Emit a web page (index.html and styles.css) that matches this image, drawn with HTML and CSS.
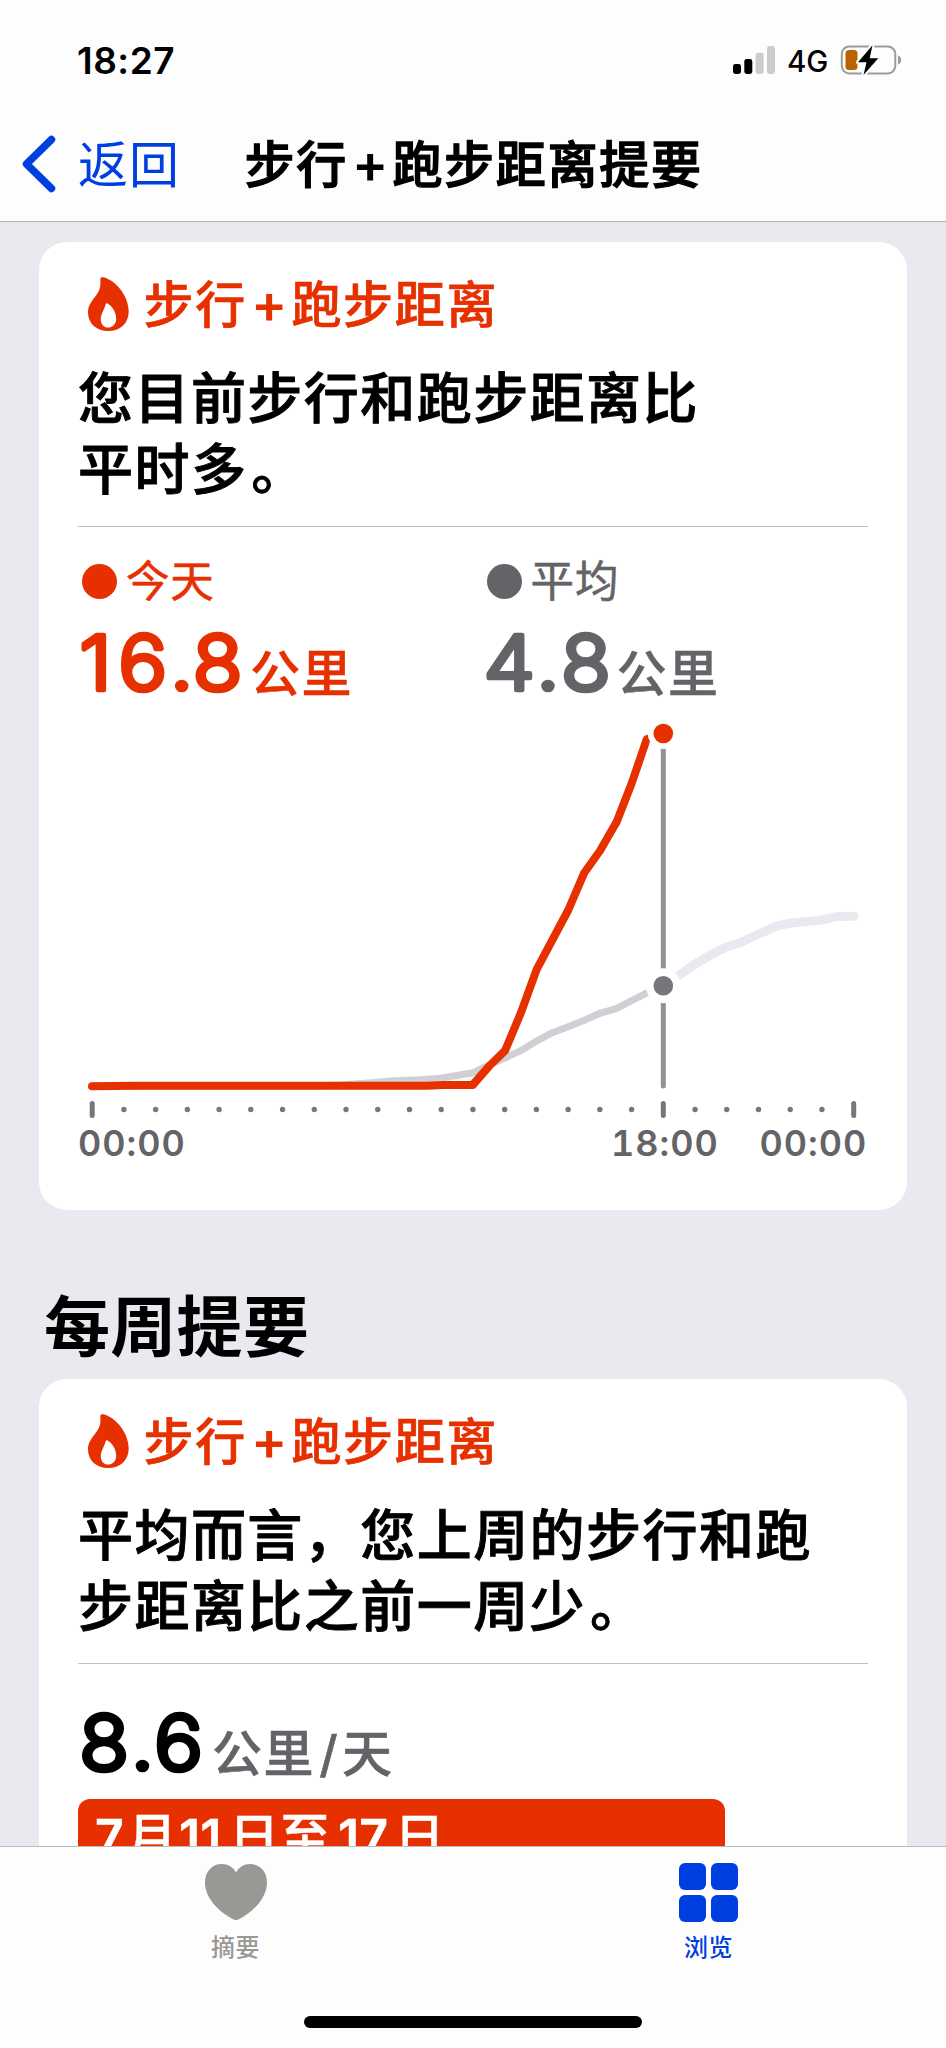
FILE: index.html
```html
<!DOCTYPE html>
<html lang="zh-CN">
<head>
<meta charset="utf-8">
<title>步行+跑步距离提要</title>
<link rel="stylesheet" href="styles.css">
</head>
<body>
<div class="screen">
  <header class="top">
    <div class="status">
      <span class="clock">18:27</span>
      <div class="status-icons">
        <svg class="signal" viewBox="0 0 42 28">
          <rect x="0" y="18" width="8" height="10" rx="2.4"/>
          <rect x="11.3" y="13" width="8" height="15" rx="2.4"/>
          <rect class="off" x="22.6" y="6.700" width="8" height="21.300" rx="2.4"/>
          <rect class="off" x="34" y="0" width="8" height="28" rx="2.4"/>
        </svg>
        <span class="network">4G</span>
        <svg class="battery" viewBox="0 0 62 32">
          <rect class="shell" x="1.800" y="2.500" width="53.500" height="27" rx="7.500"/>
          <path class="nub" d="M58 11.500c4.200 1 4.200 8 0 9z"/>
          <rect class="charge" x="5.500" y="6" width="12" height="20" rx="3.500"/>
          <path class="bolt" d="M32.500 1.300 18 18.200h8.500L23.500 31 38.300 14.200h-8.600z"/>
        </svg>
      </div>
    </div>
    <nav class="nav">
      <svg class="chevron" viewBox="0 0 34 58"><path d="M29.500 4.500 4.500 29l25 24.500"/></svg>
      <span class="back">返回</span>
      <h1 class="title">步行<span class="plus">+</span>跑步距离提要</h1>
    </nav>
  </header>

  <main class="content">
    <section class="card">
      <div class="card-title">
        <svg class="flame" viewBox="0 0 41 54"><path fill-rule="evenodd" d="M12.400 1.500C12.800.300 14 0 15.500.300 29 4 40.700 20 40.700 34.500 40.700 46.500 32 54 20.300 54 8.500 54 0 46.500 0 35.500 0 22.500 13.500 18.500 12.400 5zM17.700 27C16.300 33 12.800 36.500 12.800 42.500c0 4.600 3 8.100 7.200 8.100s8.200-3.300 8.200-8.600c0-7-4-13-8.600-15.600-.9-.5-1.600-.3-1.900.6z"/></svg>
        <h2>步行<span class="plus">+</span>跑步距离</h2>
      </div>
      <p class="summary">您目前步行和跑步距离比<br>平时多<span class="stop">。</span></p>
      <hr class="rule">
      <div class="stats">
        <div class="stat today">
          <div class="legend"><i class="dot"></i>今天</div>
          <div class="value">
            <svg class="number wide" viewBox="0 604 172 96"><text transform="scale(1.07 1)" y="690" x="1.400 37.600 86.300 107.300">16.8</text></svg>
            <span class="unit">公里</span>
          </div>
        </div>
        <div class="stat average">
          <div class="legend"><i class="dot"></i>平均</div>
          <div class="value">
            <svg class="number" viewBox="0 604 134 96"><text transform="scale(1.07 1)" y="690" x=".800 50 72.800">4.8</text></svg>
            <span class="unit">公里</span>
          </div>
        </div>
      </div>
      <svg class="chart" viewBox="78 700 790 490">
        <path class="projected" d="M663.300 985.700 678.300 975.700 695.700 963.700 710.700 955 726.700 947 742.700 941.700 758.700 934 773.300 927.300Q781 924.500 790 923.300L821.700 920 836.700 916.700Q842 916.200 854 916.300"/>
        <path class="usual" d="M92 1086H320L340 1085 375 1082.500 390 1081 420 1079.800 440 1078.300 473.300 1072.700 489 1065 505 1058 520.700 1050.700 536.700 1041 552.300 1032.700 568.300 1026.700 584.300 1020.300 600 1013.300 616.700 1008.300 631.700 1000.700 647.300 992.700 663.300 985.700"/>
        <path class="current" d="M92 1086.300 137 1085.700H426.700L443 1085H472.700L489.300 1066 505 1050.700 520.700 1013.300 536.700 969.300 568.300 910 584.300 872.700 600 850.700 616.700 821.700 631.700 783.300 646.700 739.300 663.300 733.500"/>
        <path class="marker" d="M663.300 740V1086"/>
        <circle class="halo" cx="663.300" cy="733.500" r="15.500"/>
        <circle class="halo" cx="663.300" cy="985.700" r="17.500"/>
        <circle class="point-current" cx="663.300" cy="733.500" r="9.800"/>
        <circle class="point-usual" cx="663.300" cy="985.700" r="9.800"/>
        <path class="tick" d="M92.200 1103.500V1115.500M663.300 1103.500V1115.500M853.700 1103.500V1115.500"/>
        <path class="minor" d="M123.900 1109.500H650"/>
        <path class="minor" d="M695.030 1109.500H830"/>
        <g class="axis"><text x="78" y="1155.500">00:00</text><text x="611" y="1155.500">18:00</text><text x="759.500" y="1155.500">00:00</text></g>
      </svg>
    </section>

    <h2 class="section-title">每周提要</h2>

    <section class="card weekly">
      <div class="card-title">
        <svg class="flame" viewBox="0 0 41 54"><path fill-rule="evenodd" d="M12.400 1.500C12.800.300 14 0 15.500.300 29 4 40.700 20 40.700 34.500 40.700 46.500 32 54 20.300 54 8.500 54 0 46.500 0 35.500 0 22.500 13.500 18.500 12.400 5zM17.700 27C16.300 33 12.800 36.500 12.800 42.500c0 4.600 3 8.100 7.200 8.100s8.200-3.300 8.200-8.600c0-7-4-13-8.600-15.600-.9-.5-1.600-.3-1.900.6z"/></svg>
        <h2>步行<span class="plus">+</span>跑步距离</h2>
      </div>
      <p class="summary">平均而言，您上周的步行和跑<br>步距离比之前一周少<span class="stop">。</span></p>
      <hr class="rule">
      <div class="value daily">
        <svg class="number" viewBox="0 604 134 96"><text transform="scale(1.07 1)" y="690" x="1.100 49.500 71">8.6</text></svg>
        <span class="unit">公里<span class="slash">/</span>天</span>
      </div>
      <div class="bar"><b class="month">7</b>月<b class="from">11</b>日至<b class="to">17</b>日</div>
    </section>
  </main>

  <footer class="tabs">
    <div class="tab-row">
      <div class="tab">
        <svg class="heart" viewBox="0 0 62 56"><path d="M31 8.500C34 3 39 0 45 0 55 0 62 7.500 62 18.500 62 33 50 46.500 34.500 55 32 56.300 30 56.300 27.500 55 12 46.500 0 33 0 18.500 0 7.500 7 0 17 0 23 0 28 3 31 8.500z"/></svg>
        <span>摘要</span>
      </div>
      <div class="tab active">
        <div class="grid"><i></i><i></i><i></i><i></i></div>
        <span>浏览</span>
      </div>
    </div>
    <div class="home"></div>
  </footer>
</div>
</body>
</html>
```
FILE: styles.css
```css
* { box-sizing: border-box; margin: 0; padding: 0; }

body {
  width: 946px;
  font-family: "Noto Sans CJK SC", sans-serif;
  color: #000;
  background: #eae9ef;
}

svg { display: block; flex: none; }

.screen {
  display: flex;
  flex-direction: column;
  width: 946px;
  height: 2048px;
  overflow: hidden;
}

/* Status and navigation bars */
.top {
  flex: none;
  height: 222px;
  background: #fefdfe;
  border-bottom: 1px solid #b2b2b5;
}
.status {
  display: flex;
  justify-content: space-between;
  align-items: center;
  height: 120px;
  padding: 0 44px 0 77px;
  font-family: Inter, sans-serif;
}
.clock { font-size: 37px; font-weight: 600; letter-spacing: .500px; }
.status-icons { display: flex; align-items: center; }
.signal { width: 42px; height: 28px; }
.signal .off { fill: #cdcccd; }
.network { width: 65px; padding-left: 12px; font-size: 29.5px; font-weight: 500; line-height: 36px; padding-top: 2px; }
.battery { width: 62px; height: 32px; }
.shell { fill: none; stroke: #9c9b9c; stroke-width: 2; }
.nub { fill: #9c9b9c; }
.charge { fill: #b86200; }
.bolt { stroke: #fefdfe; stroke-width: 4; paint-order: stroke; stroke-linejoin: round; }

.nav { display: flex; align-items: flex-start; height: 90px; padding: 15px 0 0 22px; }
.chevron { width: 34px; height: 58px; fill: none; stroke: #003fdf; stroke-width: 7.5; stroke-linecap: round; stroke-linejoin: round; }
.back { flex: none; width: 188.500px; margin-top: -4px; padding-left: 22px; font-size: 50px; line-height: 60px; letter-spacing: 1px; color: #003fdf; white-space: nowrap; }
.title { flex: none; margin-top: -4px; font-size: 50px; line-height: 60px; font-weight: 500; letter-spacing: 1.700px; white-space: nowrap; -webkit-text-stroke: 1.300px currentColor; }
.plus { display: inline-block; width: 44.500px; text-align: center; font-family: Inter, sans-serif; font-size: 54px; font-weight: 600; letter-spacing: 0; line-height: 50px; -webkit-text-stroke: 0; }

/* Cards */
.content { flex: 1; min-height: 0; overflow: hidden; padding: 20px 39px 0; }
.card { height: 968px; padding: 29px 39px 0; border-radius: 28px; background: #fff; }
.card-title { display: flex; height: 60px; padding-left: 10px; color: #e63000; }
.card-title h2 { font-size: 50px; line-height: 60px; font-weight: 500; letter-spacing: 1.700px; padding-left: 14.500px; -webkit-text-stroke: .700px currentColor; }
.flame { width: 41px; height: 54px; margin-top: 6px; fill: #e63000; }
.summary { margin-top: 28px; height: 141px; font-size: 55px; line-height: 70.600px; font-weight: 500; letter-spacing: 1.450px; white-space: nowrap; -webkit-text-stroke: .900px currentColor; }
.stop { padding-left: 4px; }
.rule { margin-top: 26px; height: 1px; border: 0; background: #c0c0c2; }

.stats { display: flex; padding-top: 27px; }
.stat { flex: none; width: 404.600px; }
.average { width: 385px; }
.today { color: #e63000; }
.average { color: #646368; }
.legend { display: flex; align-items: center; height: 50px; padding-left: 4px; font-size: 43.500px; line-height: 50px; letter-spacing: .800px; -webkit-text-stroke: .600px currentColor; }
.dot { width: 35px; height: 35px; margin: 5px 9px 0 0; border-radius: 50%; background: currentColor; }
.value { display: flex; height: 96px; }
.number { width: 134px; height: 96px; overflow: visible; }
.number.wide { width: 172px; }
.number text { font-family: Inter, sans-serif; font-size: 76px; font-weight: 300; fill: currentColor; stroke: currentColor; stroke-width: 4.600; stroke-linejoin: round; }
.unit { margin-top: 36px; font-size: 50px; line-height: 60px; letter-spacing: 1.500px; font-weight: 500; white-space: nowrap; -webkit-text-stroke: .500px currentColor; }

.chart { width: 790px; height: 490px; fill: none; }
.projected { stroke: #eae9ef; stroke-width: 9; stroke-linecap: round; stroke-linejoin: round; }
.usual { stroke: #d0cfd5; stroke-width: 7; stroke-linejoin: round; }
.current { stroke: #e63000; stroke-width: 8; stroke-linecap: round; stroke-linejoin: round; }
.marker { stroke: #929196; stroke-width: 5; stroke-linecap: round; }
.halo { fill: #fff; }
.point-current { fill: #e63000; }
.point-usual { fill: #77767b; }
.tick { stroke: #77767b; stroke-width: 5; stroke-linecap: round; }
.minor { stroke: #77767b; stroke-width: 5.400; stroke-linecap: round; stroke-dasharray: 0 31.730; }
.axis text { font-family: Inter, sans-serif; font-size: 36px; font-weight: 600; font-feature-settings: "tnum"; letter-spacing: 1px; fill: #646368; }

.section-title { height: 169px; padding: 67px 0 0 5px; font-size: 66px; line-height: 90px; font-weight: 700; letter-spacing: .300px; }
.daily { margin-top: 20px; }
.daily .unit { color: #646368; }
.slash { display: inline-block; width: 27px; text-align: center; font-family: Inter, sans-serif; line-height: 50px; letter-spacing: 0; }
.bar { width: 647px; height: 120px; margin-top: 19px; padding: 4px 0 0 17px; border-radius: 12px; background: #e63000; color: #fff; font-size: 50px; line-height: 60px; font-weight: 500; letter-spacing: 1px; white-space: nowrap; -webkit-text-stroke: .500px currentColor; }
.bar b { display: inline-block; line-height: 50px; font-family: Inter, sans-serif; font-weight: 600; letter-spacing: 0; }
.bar .month { width: 32px; }
.bar .from { width: 51px; padding-left: 1px; }
.bar .to { width: 63.500px; padding-left: 7px; }

/* Tab bar */
.tabs { flex: none; display: flex; flex-direction: column; align-items: center; height: 202px; border-top: 1px solid #bdbcbe; background: #fefdfe; }
.tab-row { display: flex; width: 946px; height: 169px; padding-top: 16px; }
.tab { display: flex; flex-direction: column; align-items: center; width: 471px; color: #999895; font-size: 24px; line-height: 30px; font-weight: 500; letter-spacing: .500px; }
.tab span { margin-top: 9px; }
.heart { width: 62px; height: 56px; margin: 1px 0 2px; fill: #999895; }
.tab.active { width: 475px; color: #003fdf; }
.grid { display: grid; grid-template-columns: 27px 27px; gap: 4.500px; height: 59px; }
.grid i { height: 27px; border-radius: 6px; background: #003fdf; }
.home { width: 338px; height: 12px; border-radius: 6px; background: #000; }
```
